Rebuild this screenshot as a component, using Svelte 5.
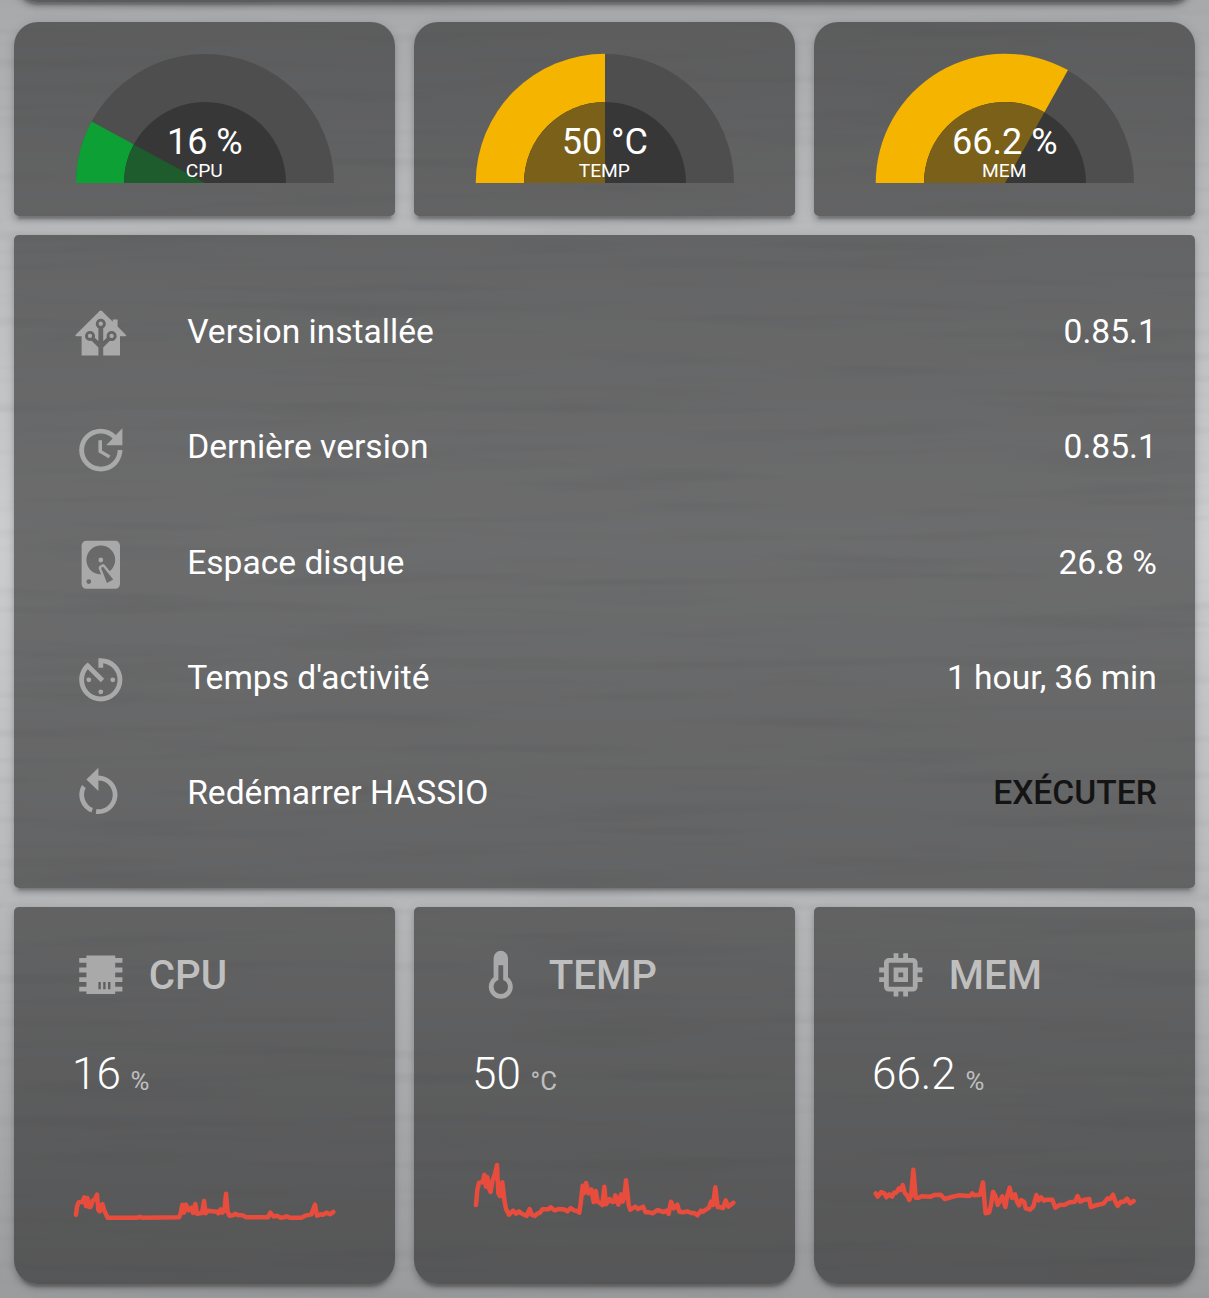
<script>
  const icons = {
    home: 'M21.8,13H20V21H13V17.67L15.79,14.88L16.5,15C17.66,15 18.6,14.06 18.6,12.9C18.6,11.74 17.66,10.8 16.5,10.8A2.1,2.1 0 0,0 14.4,12.9L14.5,13.61L13,15.13V9.65C13.66,9.29 14.1,8.6 14.1,7.8A2.1,2.1 0 0,0 12,5.7A2.1,2.1 0 0,0 9.9,7.8C9.9,8.6 10.34,9.29 11,9.65V15.13L9.5,13.61L9.6,12.9A2.1,2.1 0 0,0 7.5,10.8A2.1,2.1 0 0,0 5.4,12.9A2.1,2.1 0 0,0 7.5,15L8.21,14.88L11,17.67V21H4V13H2.25C1.83,13 1.42,13 1.42,12.79C1.43,12.57 1.85,12.15 2.28,11.72L11,3C11.33,2.67 11.67,2.33 12,2.33C12.33,2.33 12.67,2.67 13,3L17,7V6H19V9L21.78,11.78C22.18,12.18 22.59,12.59 22.6,12.8C22.6,13 22.2,13 21.8,13M7.5,12A.9.9 0 0,1 8.4,12.9A.9.9 0 0,1 7.5,13.8A.9.9 0 0,1 6.6,12.9A.9.9 0 0,1 7.5,12M16.5,12C17,12 17.4,12.4 17.4,12.9C17.4,13.4 17,13.8 16.5,13.8A.9.9 0 0,1 15.6,12.9A.9.9 0 0,1 16.5,12M12,6.9C12.5,6.9 12.9,7.3 12.9,7.8C12.9,8.3 12.5,8.7 12,8.7C11.5,8.7 11.1,8.3 11.1,7.8C11.1,7.3 11.5,6.9 12,6.9Z',
    update: 'M21,10.12H14.22L16.96,7.3C14.23,4.6 9.81,4.5 7.08,7.2C4.35,9.91 4.35,14.28 7.08,17C9.81,19.7 14.23,19.7 16.96,17C18.32,15.65 19,14.08 19,12.1H21C21,14.08 20.12,16.65 18.36,18.39C14.85,21.87 9.15,21.87 5.64,18.39C2.14,14.92 2.11,9.28 5.62,5.81C9.13,2.34 14.76,2.34 18.27,5.81L21,3V10.12M12.5,8V12.25L16,14.33L15.28,15.54L11,13V8H12.5Z',
    disk: 'M6,2H18A2,2 0 0,1 20,4V20A2,2 0 0,1 18,22H6A2,2 0 0,1 4,20V4A2,2 0 0,1 6,2M12,4A6,6 0 0,0 6,10C6,13.31 8.69,16 12.1,16L11.22,13.77C10.95,13.29 11.11,12.68 11.59,12.4L12.45,11.9C12.93,11.63 13.54,11.79 13.82,12.27L15.74,14.69C17.12,13.59 18,11.9 18,10A6,6 0 0,0 12,4M12,9A1,1 0 0,1 13,10A1,1 0 0,1 12,11A1,1 0 0,1 11,10A1,1 0 0,1 12,9M7,18A1,1 0 0,0 6,19A1,1 0 0,0 7,20A1,1 0 0,0 8,19A1,1 0 0,0 7,18M12.09,13.27L14.58,19.58L17.17,18.08L12.95,12.77L12.09,13.27Z',
    timer: 'M11,17A1,1 0 0,0 12,18A1,1 0 0,0 13,17A1,1 0 0,0 12,16A1,1 0 0,0 11,17M11,3V7H13V5.08C16.39,5.57 19,8.47 19,12A7,7 0 0,1 12,19A7,7 0 0,1 5,12C5,10.32 5.59,8.78 6.58,7.58L12,13L13.41,11.59L6.61,4.79V4.81C4.42,6.45 3,9.05 3,12A9,9 0 0,0 12,21A9,9 0 0,0 21,12A9,9 0 0,0 12,3M18,12A1,1 0 0,0 17,11A1,1 0 0,0 16,12A1,1 0 0,0 17,13A1,1 0 0,0 18,12M6,12A1,1 0 0,0 7,13A1,1 0 0,0 8,12A1,1 0 0,0 7,11A1,1 0 0,0 6,12Z',
    restart: 'M11,4V.7L6,5.6L11,10.4V6A6,6 0 1,1 10.2,17.95L9.9,19.93A8,8 0 1,0 11,4M4.15,7.9A8,8 0 0,0 8.1,19.4L8.7,17.5A6,6 0 0,1 5.7,9.2Z',
    chip: 'M6,4H18V5H21V7H18V9H21V11H18V13H21V15H18V17H21V19H18V20H6V19H3V17H6V15H3V13H6V11H3V9H6V7H3V5H6V4M11,15V18H12V15H11M13,15V18H14V15H13M15,15V18H16V15H15Z',
    thermometer: 'M17,17A5,5 0 0,1 12,22A5,5 0 0,1 7,17C7,15.36 7.79,13.91 9,13V5A3,3 0 0,1 12,2A3,3 0 0,1 15,5V13C16.21,13.91 17,15.36 17,17M11,8V14.17C9.83,14.58 9,15.69 9,17A3,3 0 0,0 12,20A3,3 0 0,0 15,17C15,15.69 14.17,14.58 13,14.17V8H11Z',
    memory: 'M17,17H7V7H17M21,11V9H19V7C19,5.89 18.1,5 17,5H15V3H13V5H11V3H9V5H7C5.89,5 5,5.89 5,7V9H3V11H5V13H3V15H5V17A2,2 0 0,0 7,19H9V21H11V19H13V21H15V19H17A2,2 0 0,0 19,17V15H21V13H19V11M13,13H11V11H13M15,9H9V15H15V9Z'
  };

  const gauges = [
    { label: 'CPU', text: '16 %', part: 0.158, tone: 'green' },
    { label: 'TEMP', text: '50 °C', part: 0.5, tone: 'amber' },
    { label: 'MEM', text: '66.2 %', part: 0.662, tone: 'amber' }
  ];

  const rows = [
    { icon: 'home', name: 'Version installée', value: '0.85.1' },
    { icon: 'update', name: 'Dernière version', value: '0.85.1' },
    { icon: 'disk', name: 'Espace disque', value: '26.8 %' },
    { icon: 'timer', name: "Temps d'activité", value: '1 hour, 36 min' },
    { icon: 'restart', name: 'Redémarrer HASSIO', action: 'EXÉCUTER' }
  ];

  const graphs = [
    {
      icon: 'chip', title: 'CPU', value: '16', unit: '%',
      points: '49,194 52,170 57,157 68,156 74,142 79,168 83,144 88,171 93,171 99,152 106,147 112,134 116,180 120,184 128,162 134,182 144,203 232,203 240,201 248,203 358,202 363,190 368,164 373,188 379,164 387,181 396,173 400,189 407,162 412,191 427,189 433,153 438,190 445,182 472,185 476,190 483,178 488,188 494,182 499,131 504,185 509,197 520,196 527,191 535,195 548,196 560,202 625,202 632,188 642,200 652,197 662,203 674,202 681,199 690,203 725,203 737,197 755,193 766,164 772,197 783,193 791,194 800,188 812,193 821,186'
    },
    {
      icon: 'thermometer', title: 'TEMP', value: '50', unit: '°C',
      points: '49,165 53,120 58,98 69,97 74,74 79,110 83,82 88,115 93,126 98,94 107,68 112,45 116,130 121,138 128,97 134,150 139,176 148,194 160,182 169,191 178,184 184,190 201,198 210,177 216,194 225,198 233,191 241,188 248,178 266,178 273,172 280,178 287,181 296,177 312,178 323,184 333,174 343,181 352,183 359,188 363,160 369,107 373,130 379,99 387,130 395,118 402,156 408,123 414,155 420,158 428,165 434,110 439,163 450,147 458,156 463,155 467,136 476,164 484,133 489,155 494,140 499,91 504,135 507,165 512,179 527,170 535,177 550,170 558,187 569,187 579,190 593,180 612,186 620,182 627,192 634,155 642,175 653,164 659,185 670,187 683,184 695,189 704,189 713,196 724,182 730,185 748,173 754,155 760,165 767,112 774,171 783,172 790,174 798,151 806,170 821,158'
    },
    {
      icon: 'memory', title: 'MEM', value: '66.2', unit: '%',
      points: '48,130 54,140 65,126 74,130 80,142 89,133 97,140 103,128 110,128 118,115 123,120 129,105 135,128 142,136 149,150 154,138 161,59 166,115 168,143 178,143 185,139 213,140 224,135 243,134 255,147 276,141 296,136 330,138 338,130 344,136 361,134 370,97 375,160 378,190 388,188 394,165 400,125 408,140 414,165 428,139 437,171 443,136 450,113 457,144 466,133 472,155 478,166 485,150 494,157 498,175 511,179 521,169 530,135 537,151 544,142 553,152 561,149 578,149 587,173 600,165 615,164 630,157 646,155 654,138 661,155 675,149 689,147 693,171 712,165 731,161 744,145 751,147 760,134 766,152 774,168 784,155 793,155 802,146 811,160 822,153'
    }
  ];

  // Pie slice of a half circle, measured clockwise from the left end.
  function slice(part, r) {
    const a = Math.PI * (1 - part);
    const x = 129 + r * Math.cos(a);
    const y = 129 - r * Math.sin(a);
    return `M129,129L${129 - r},129A${r},${r} 0 0,1 ${x.toFixed(2)},${y.toFixed(2)}Z`;
  }
</script>

<div class="page">
  <svg class="texture" width="100%" height="100%" aria-hidden="true">
    <filter id="brushed" x="0" y="0" width="100%" height="100%">
      <feTurbulence type="fractalNoise" baseFrequency="0.004 0.07" numOctaves="2" seed="8" />
      <feColorMatrix type="matrix" values="0 0 0 0 0.15  0 0 0 0 0.15  0 0 0 0 0.16  0.3 0 0 0 -0.15" />
    </filter>
    <rect width="100%" height="100%" filter="url(#brushed)" />
  </svg>

  <div class="stack">
    <div class="card previous"></div>

    <div class="trio">
      {#each gauges as g}
        <section class="card gauge">
          <svg class="dial {g.tone}" viewBox="0 0 258 129">
            <path class="track" d={slice(1, 129)} />
            <path class="fill" d={slice(g.part, g.tone === 'amber' ? 129.3 : 129)} />
            <path class="hub" d={slice(1, 81)} />
            <path class="hubfill" d={slice(g.part, 81)} />
          </svg>
          <div class="reading">
            <span class="number">{g.text}</span>
            <span class="caption">{g.label}</span>
          </div>
        </section>
      {/each}
    </div>

    <section class="card list">
      {#each rows as row}
        <div class="row">
          <svg class="icon" viewBox="0 0 24 24"><path d={icons[row.icon]} /></svg>
          <span class="name">{row.name}</span>
          {#if row.action}
            <button class="action">{row.action}</button>
          {:else}
            <span class="value">{row.value}</span>
          {/if}
        </div>
      {/each}
    </section>

    <div class="trio">
      {#each graphs as g}
        <section class="card graph">
          <header>
            <svg class="icon" viewBox="0 0 24 24"><path d={icons[g.icon]} /></svg>
            <h2>{g.title}</h2>
          </header>
          <div class="state"><span class="big">{g.value}</span><span class="unit">{g.unit}</span></div>
          <svg class="spark" viewBox="40 0 790 300"><polyline points={g.points} /></svg>
        </section>
      {/each}
    </div>
  </div>
</div>

<style>
  :global(body) {
    margin: 0;
  }
  .page {
    position: relative;
    box-sizing: border-box;
    width: 1209px;
    height: 1298px;
    overflow: hidden;
    color: #fff;
    font: 400 33.6px/48px Roboto, sans-serif;
    background: linear-gradient(#a8a9ab 0, #b8b9bb 210px, #cccdcf 540px, #b7b8ba 900px, #9a9b9d 1298px);
  }
  .texture {
    position: absolute;
    inset: 0;
  }
  .stack {
    position: relative;
    display: flex;
    flex-direction: column;
    gap: 19.2px;
    padding: 0 13.8px 0 14.4px;
  }
  .card {
    box-sizing: border-box;
    border-radius: 4.8px;
    background: rgba(30, 30, 30, 0.55);
    box-shadow:
      0 4.8px 4.8px 0 rgba(0, 0, 0, 0.14),
      0 2.4px 12px 0 rgba(0, 0, 0, 0.12),
      0 7.2px 2.4px -4.8px rgba(0, 0, 0, 0.2);
  }
  .previous {
    height: 60px;
    margin-top: -57.6px;
    border-radius: 0 0 24px 24px;
  }
  .trio {
    display: grid;
    grid-template-columns: repeat(3, 1fr);
    gap: 19.2px;
  }
  .gauge {
    display: grid;
    justify-items: center;
    align-content: start;
    height: 194.4px;
    padding-top: 32.4px;
    border-radius: 24px 24px 4.8px 4.8px;
  }
  .dial,
  .reading {
    grid-area: 1 / 1;
  }
  .dial {
    width: 258px;
    height: 129px;
    overflow: visible;
  }
  .track {
    fill: #4e4e4e;
  }
  .hub {
    fill: #373737;
  }
  .green .fill {
    fill: #0da035;
  }
  .green .hubfill {
    fill: #1e5b2d;
  }
  .amber .fill {
    fill: #f4b400;
  }
  .amber .hubfill {
    fill: #7a6019;
  }
  .reading {
    display: flex;
    flex-direction: column;
    align-items: center;
    align-self: end;
  }
  .number {
    font-size: 36px;
    line-height: 36px;
    margin-bottom: -1px;
  }
  .caption {
    font-size: 19.2px;
    line-height: 24px;
    margin-right: 1px;
  }
  .list {
    display: flex;
    flex-direction: column;
    gap: 19.2px;
    height: 652.8px;
    padding: 48px 38.4px;
  }
  .row {
    display: flex;
    align-items: center;
    height: 96px;
  }
  .icon {
    flex: none;
    width: 57.6px;
    height: 57.6px;
    fill: #a9a9a9;
  }
  .row .icon {
    margin: 6px 57.8px 0 19px;
  }
  .name {
    flex: 1;
  }
  .name,
  .value,
  .row .action {
    padding-top: 2px;
  }
  .action {
    padding: 0;
    border: 0;
    background: none;
    color: #141414;
    font: 500 33.6px/48px Roboto, sans-serif;
  }
  .graph {
    height: 377px;
    padding: 38.4px 38.4px 0 57.6px;
    border-radius: 4.8px 4.8px 24px 24px;
  }
  header {
    display: flex;
    align-items: center;
    gap: 19.2px;
  }
  h2 {
    margin: 3.4px 0 0;
    color: #bfbfbf;
    font-size: 40.3px;
    font-weight: 500;
    line-height: 48px;
  }
  .state {
    display: flex;
    align-items: baseline;
    gap: 9.8px;
    margin-top: 45.6px;
  }
  .big {
    font-size: 44px;
    font-weight: 300;
    line-height: 50px;
  }
  .unit {
    position: relative;
    top: 1px;
    color: #bfbfbf;
    font-size: 25.8px;
  }
  .spark {
    display: block;
    width: 263.33px;
    height: 100px;
    margin: 46.4px 0 0 0.9px;
  }
  .spark polyline {
    fill: none;
    stroke: #e74c3c;
    stroke-width: 13.5;
    stroke-linecap: round;
    stroke-linejoin: round;
  }
</style>
